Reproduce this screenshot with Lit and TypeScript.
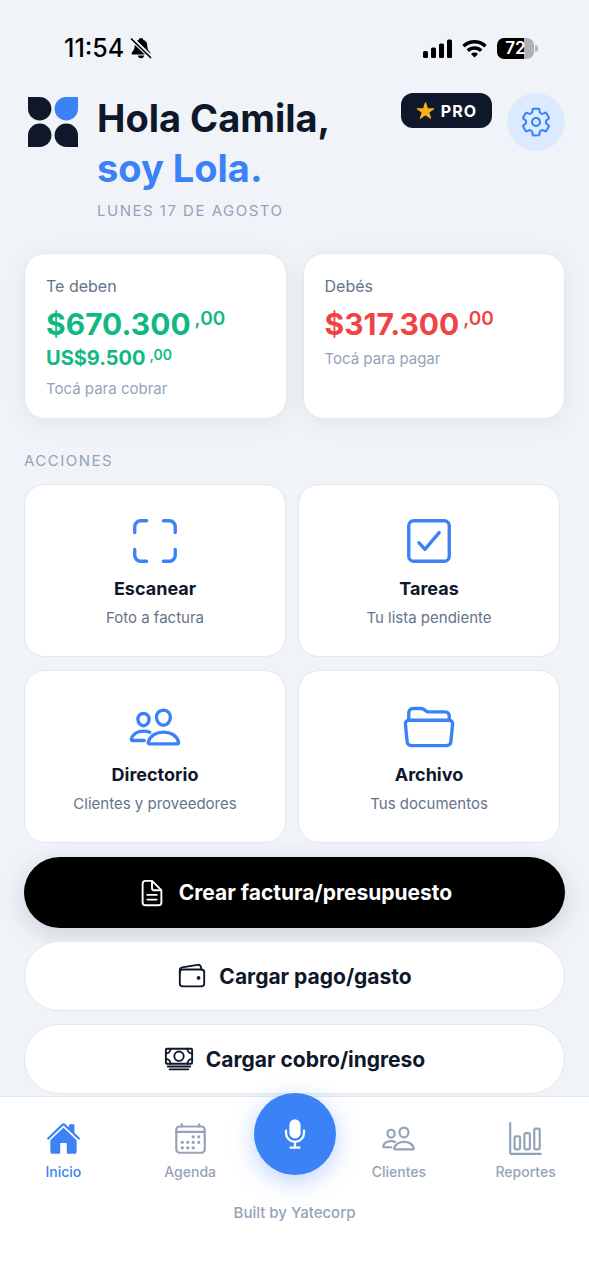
import { LitElement, html, css, svg, nothing } from "lit";
import { customElement, property } from "lit/decorators.js";

const ICONS: Record<string, unknown> = {
  scan: svg`<path d="M336 448h56a56 56 0 0056-56v-56M448 176v-56a56 56 0 00-56-56h-56M176 448h-56a56 56 0 01-56-56v-56M64 176v-56a56 56 0 0156-56h56"/>`,
  check: svg`<path d="M352 176L217.6 336 160 272"/><rect x="64" y="64" width="384" height="384" rx="48"/>`,
  people: svg`<path d="M402 168c-2.93 40.67-33.1 72-66 72s-63.12-31.32-66-72c-3-42.31 26.37-72 66-72s69 30.46 66 72z"/><path d="M336 304c-65.17 0-127.84 32.37-143.54 95.41-2.08 8.34 3.15 16.59 11.72 16.59h263.65c8.57 0 13.77-8.25 11.72-16.59C463.85 335.36 401.18 304 336 304z"/><path d="M200 185.94c-2.34 32.48-26.72 58.06-53 58.06s-50.7-25.57-53-58.06C91.61 152.15 115.34 128 147 128s55.39 24.77 53 57.94z"/><path d="M206 306c-18.05-8.27-37.93-11.45-59-11.45-52 0-102.1 25.85-114.65 76.2-1.65 6.66 2.53 13.25 9.37 13.25H154"/>`,
  folder: svg`<path d="M64 192v-72a40 40 0 0140-40h75.89a40 40 0 0122.19 6.72l27.84 18.56a40 40 0 0022.19 6.72H408a40 40 0 0140 40v40"/><path d="M479.9 226.55L463.68 392a40 40 0 01-39.93 40H88.25a40 40 0 01-39.93-40L32.1 226.55A32 32 0 0164 192h384.1a32 32 0 0131.8 34.55z"/>`,
  doc: svg`<path d="M416 221.25V416a48 48 0 01-48 48H144a48 48 0 01-48-48V96a48 48 0 0148-48h98.75a32 32 0 0122.62 9.37l141.26 141.26a32 32 0 019.37 22.62z"/><path d="M256 56v120a32 32 0 0032 32h120M176 288h160M176 368h160"/>`,
  wallet: svg`<rect x="48" y="144" width="416" height="288" rx="48"/><path d="M411.36 144v-30A50 50 0 00352 64.9L88.64 109.85A50 50 0 0048 159v49"/><circle class="solid" cx="368" cy="288" r="32"/>`,
  cash: svg`<rect x="32" y="80" width="448" height="256" rx="16"/><path d="M64 384h384M96 432h320"/><circle cx="256" cy="208" r="80"/><path d="M480 160a80 80 0 01-80-80M32 160a80 80 0 0080-80M480 256a80 80 0 00-80 80M32 256a80 80 0 0180 80"/>`,
  home: svg`<path class="solid" d="M261.56 101.28a8 8 0 00-11.06 0L66.4 277.15a8 8 0 00-2.47 5.79L63.9 448a32 32 0 0032 32H192a16 16 0 0016-16V328a8 8 0 018-8h80a8 8 0 018 8v136a16 16 0 0016 16h96.06a32 32 0 0032-32V282.94a8 8 0 00-2.47-5.79z"/><path class="solid" d="M490.91 244.15l-74.8-71.56V64a16 16 0 00-16-16h-48a16 16 0 00-16 16v32l-57.92-55.38C272.77 35.14 264.71 32 256 32c-8.68 0-16.72 3.14-22.14 8.63l-212.7 203.5c-6.22 6-7 15.87-1.34 22.37A16 16 0 0043 267.56L250.5 69.28a8 8 0 0111.06 0l207.52 198.28a16 16 0 0022.59-.44c6.14-6.36 5.63-16.86-.76-22.97z"/>`,
  calendar: svg`<rect x="48" y="80" width="416" height="384" rx="48"/><path d="M128 48v32M384 48v32M464 160H48"/>${[[296, 232], [376, 232], [296, 312], [376, 312], [136, 312], [216, 312], [136, 392], [216, 392], [296, 392]].map(([x, y]) => svg`<circle class="solid" cx=${x} cy=${y} r="24"/>`)}`,
  chart: svg`<path d="M32 32v432a16 16 0 0016 16h432"/><rect x="96" y="224" width="80" height="192" rx="20"/><rect x="240" y="176" width="80" height="240" rx="20"/><rect x="384" y="112" width="80" height="304" rx="20"/>`,
  mic: svg`<path d="M192 448h128M384 208v32c0 70.4-57.6 128-128 128s-128-57.6-128-128v-32M256 368v80"/><path class="solid" d="M256 320a78.83 78.83 0 01-56.55-24.1A80.89 80.89 0 01176 239V128a79.69 79.69 0 0180-80c44.86 0 80 35.14 80 80v111c0 44.66-35.89 81-80 81z"/>`,
  settings: svg`<path d="M262.29 192.31a64 64 0 1057.4 57.4 64.13 64.13 0 00-57.4-57.4zM416.39 256a154.34 154.34 0 01-1.53 20.79l45.21 35.46a10.81 10.81 0 012.45 13.75l-42.77 74a10.81 10.81 0 01-13.14 4.59l-44.9-18.08a16.11 16.11 0 00-15.17 1.75A164.48 164.48 0 01325 400.8a15.94 15.94 0 00-8.82 12.14l-6.73 47.89a11.08 11.08 0 01-10.68 9.17h-85.54a11.11 11.11 0 01-10.69-8.87l-6.72-47.82a16.07 16.07 0 00-9-12.22 155.3 155.3 0 01-21.46-12.57 16 16 0 00-15.11-1.71l-44.89 18.07a10.81 10.81 0 01-13.14-4.58l-42.77-74a10.8 10.8 0 012.45-13.75l38.21-30a16.05 16.05 0 006-14.08c-.36-4.17-.58-8.33-.58-12.5s.21-8.27.58-12.35a16 16 0 00-6.07-13.94l-38.19-30A10.81 10.81 0 0149.48 186l42.77-74a10.81 10.81 0 0113.14-4.59l44.9 18.08a16.11 16.11 0 0015.17-1.75A164.48 164.48 0 01187 111.2a15.94 15.94 0 008.82-12.14l6.73-47.89A11.08 11.08 0 01213.23 42h85.54a11.11 11.11 0 0110.69 8.87l6.72 47.82a16.07 16.07 0 009 12.22 155.3 155.3 0 0121.46 12.57 16 16 0 0015.11 1.71l44.89-18.07a10.81 10.81 0 0113.14 4.58l42.77 74a10.8 10.8 0 01-2.45 13.75l-38.21 30a16.05 16.05 0 00-6.05 14.08c.33 4.14.55 8.3.55 12.47z"/>`,
  star: svg`<path class="solid" d="M394 480a16 16 0 01-9.39-3L256 383.76 127.39 477a16 16 0 01-24.55-18.08L153 310.35 23 221.2a16 16 0 019-29.2h160.38l48.4-148.95a16 16 0 0130.44 0l48.4 149H480a16 16 0 019.05 29.2L359 310.35l50.13 148.53A16 16 0 01394 480z"/>`,
};

@customElement("ui-icon")
class UiIcon extends LitElement {
  @property() name = "";

  static styles = css`
    :host { display: block; flex: none; width: 30px; height: 30px; }
    svg { display: block; width: 100%; height: 100%; fill: none; stroke: currentColor;
      stroke-width: 32; stroke-linecap: round; stroke-linejoin: round; }
    .solid { fill: currentColor; stroke: none; }
  `;

  render() {
    return html`<svg viewBox="0 0 512 512" aria-hidden="true">${ICONS[this.name]}</svg>`;
  }
}

const ACTIONS = [
  { icon: "scan", title: "Escanear", sub: "Foto a factura" },
  { icon: "check", title: "Tareas", sub: "Tu lista pendiente" },
  { icon: "people", title: "Directorio", sub: "Clientes y proveedores" },
  { icon: "folder", title: "Archivo", sub: "Tus documentos" },
];

@customElement("app-root")
class AppRoot extends LitElement {
  static styles = css`
    :host { display: flex; flex-direction: column; min-height: 100vh; background: #f0f4f9;
      color: #0f172a; font-family: Inter, sans-serif; }
    * { box-sizing: border-box; }
    button { font: inherit; color: inherit; border: 0; padding: 0; background: none; cursor: pointer; }
    a { color: inherit; text-decoration: none; }
    h1, h2, p { margin: 0; font-weight: inherit; }

    .status { display: flex; justify-content: space-between; align-items: center;
      padding: 36px 51px 0 64px; color: #000; }
    .time { display: flex; align-items: center; gap: 6px; font-size: 25px; line-height: 24px; font-weight: 500; }
    .bell { display: block; width: 22px; height: 22px; }
    .signals { display: flex; align-items: center; gap: 10px; }
    .signals svg { display: block; }
    .battery { display: flex; align-items: center; gap: 1px; }
    .cell { width: 37px; height: 21px; border-radius: 7px; color: #fff; font-size: 17px; font-weight: 600;
      line-height: 21px; text-align: center; background: linear-gradient(90deg, #000 73%, #aeb1b5 73%); }
    .cap { width: 3px; height: 7px; border-radius: 0 3px 3px 0; background: #b4b7bb; }

    .page { display: flex; flex-direction: column; padding: 33px 24px 2px; }
    .header { display: flex; align-items: flex-start; }
    .logo { display: block; flex: none; width: 50px; height: 50px; margin: 4px 19px 0 4px; }
    .greet { flex: 1; }
    .hello { font-size: 38px; line-height: 50px; font-weight: 700; }
    .lola { display: block; color: #3b82f6; }
    .date { color: #94a3b8; font-size: 15px; line-height: 20px; letter-spacing: 1.5px; margin-top: 8px; }
    .tools { display: flex; align-items: flex-start; gap: 15px; }
    .pro { display: flex; align-items: center; gap: 6px; height: 35px; padding: 0 15px; border-radius: 12px;
      background: #0f172a; color: #fff; font-size: 16px; font-weight: 700; letter-spacing: 1px; }
    .pro ui-icon { width: 19px; height: 19px; color: #fbb018; }
    .gear { display: grid; place-items: center; width: 58px; height: 58px; border-radius: 50%;
      background: #dbeafe; color: #3b82f6; }
    .gear ui-icon { width: 32px; height: 32px; }

    .balances { display: grid; grid-template-columns: 1fr 1fr; gap: 16px; margin-top: 32px; }
    .balance { display: flex; flex-direction: column; align-items: flex-start; text-align: left;
      min-height: 166px; padding: 20px 21px 16px; border: 1px solid #e2e8f0; border-radius: 21px; background: #fff;
      box-shadow: 0 4px 24px rgba(15, 23, 42, 0.06); }
    .label { color: #64748b; font-size: 16px; line-height: 24px; }
    .amount { display: flex; align-items: flex-start; gap: 4px; font-size: 30px; line-height: 32px;
      font-weight: 700; margin-top: 10px; }
    .cents { font-size: 19px; line-height: 22px; font-weight: 600; }
    .minor { font-size: 20px; line-height: 24px; margin-top: 6px; }
    .minor .cents { font-size: 14px; line-height: 18px; }
    .green { color: #10b981; }
    .red { color: #ef4444; }
    .hint { color: #94a3b8; font-size: 15px; line-height: 20px; margin-top: 9px; }

    .section { color: #94a3b8; font-size: 15px; line-height: 20px; letter-spacing: 1.5px; margin: 32px 0 13px; }
    .grid { display: grid; grid-template-columns: 1fr 1fr; gap: 13px 12px; padding-right: 5px; }
    .tile { display: flex; flex-direction: column; align-items: center; min-height: 173px; padding: 29px 8px 0;
      border: 1px solid #e2e8f0; border-radius: 21px; background: #fff; }
    .tile ui-icon { width: 54px; height: 54px; color: #3b82f6; }
    .name { font-size: 18px; line-height: 24px; font-weight: 700; margin-top: 9px; }
    .sub { color: #64748b; font-size: 15px; line-height: 20px; margin-top: 7px; }

    .ctas { display: flex; flex-direction: column; gap: 13px; margin-top: 14px; }
    .cta { display: flex; align-items: center; justify-content: center; gap: 12px; height: 70px;
      border: 1px solid #e2e8f0; border-radius: 36px; background: #fff; font-size: 21px; font-weight: 700; }
    .primary { height: 71px; border: 0; background: #000; color: #fff;
      box-shadow: 0 6px 24px rgba(15, 23, 42, 0.16); }

    .nav { flex: 1; background: #fff; border-top: 1px solid #e2e8f0; }
    .tabs { display: flex; align-items: flex-start; }
    .tab { flex: 1; display: flex; flex-direction: column; align-items: center; gap: 6px; padding-top: 24px;
      color: #94a3b8; font-size: 14px; line-height: 20px; font-weight: 500; }
    .tab ui-icon { width: 35px; height: 35px; }
    .tab.active { color: #3b82f6; }
    .voice { display: grid; place-items: center; width: 82px; height: 82px; margin-top: -4px; border-radius: 50%;
      background: #3b82f6; color: #fff; box-shadow: 0 6px 24px rgba(59, 130, 246, 0.35); }
    .voice ui-icon { width: 36px; height: 36px; }
    .credit { color: #94a3b8; font-size: 15px; line-height: 20px; font-weight: 500; text-align: center;
      margin: 21px 0 24px; }
  `;

  private amount(value: string, tone: string, minor = false) {
    return html`<span class="amount ${tone} ${minor ? "minor" : ""}"><span>${value}</span><span class="cents">,00</span></span>`;
  }

  private tab(icon: string, label: string, active = false) {
    return html`<a class="tab ${active ? "active" : ""}" href="#" aria-current=${active ? "page" : nothing}>
      <ui-icon name=${icon}></ui-icon><span>${label}</span></a>`;
  }

  render() {
    return html`
      <div class="status">
        <div class="time">
          <span>11:54</span>
          <svg class="bell" viewBox="0 0 22 22" aria-hidden="true">
            <path d="M11 1c-1.3 0-2.2.8-2.4 1.9C6 3.7 4.700 5.800 4.700 8.500c0 3.800-1.300 5.300-2.700 6.700-.9.9-.5 2.200.8 2.200h16.400c1.300 0 1.700-1.300.8-2.200-1.400-1.400-2.700-2.900-2.700-6.700 0-2.700-1.300-4.800-3.900-5.600C13.200 1.800 12.300 1 11 1zM8 18.600a3 2.600 0 006 0z" fill="currentColor"/>
            <path d="M1.5 1.5l19 18.5" stroke="#f0f4f9" stroke-width="4.5"/>
            <path d="M1.5 2l19 18.5" stroke="currentColor" stroke-width="1.7" stroke-linecap="round"/>
          </svg>
        </div>
        <div class="signals">
          <svg width="29" height="19" viewBox="0 0 29 19" fill="currentColor" aria-hidden="true">
            <rect x="0" y="12" width="5" height="7" rx="1.5"/><rect x="8" y="8.5" width="5" height="10.5" rx="1.5"/>
            <rect x="16" y="4.5" width="5" height="14.5" rx="1.5"/><rect x="24" y="0.5" width="5" height="18.5" rx="1.5"/>
          </svg>
          <svg width="25" height="19" viewBox="0 0 25 19" fill="none" stroke="currentColor" stroke-width="3.4" aria-hidden="true">
            <path d="M1.5 7.3a15.6 15.6 0 0122 0M5.8 11.7a9.5 9.5 0 0113.4 0"/>
            <path d="M12.5 18.5l-3.5-3.6a5 5 0 017 0z" fill="currentColor" stroke="none"/>
          </svg>
          <div class="battery"><div class="cell">72</div><div class="cap"></div></div>
        </div>
      </div>

      <main class="page">
        <header class="header">
          <svg class="logo" viewBox="0 0 50 50" fill="#0f172a" aria-hidden="true">
            <path d="M0 0h11.7a11.7 11.7 0 11-11.7 11.7z"/>
            <path d="M50 0H38.3A11.7 11.7 0 1050 11.7z" fill="#3b82f6"/>
            <path d="M0 50V38.3A11.7 11.7 0 1111.7 50z"/>
            <path d="M50 50V38.3A11.7 11.7 0 1038.3 50z"/>
          </svg>
          <div class="greet">
            <h1 class="hello">Hola Camila,<span class="lola">soy Lola.</span></h1>
            <p class="date">LUNES 17 DE AGOSTO</p>
          </div>
          <div class="tools">
            <button class="pro"><ui-icon name="star"></ui-icon>PRO</button>
            <button class="gear" aria-label="Configuración"><ui-icon name="settings"></ui-icon></button>
          </div>
        </header>

        <section class="balances">
          <button class="balance">
            <span class="label">Te deben</span>
            ${this.amount("$670.300", "green")}
            ${this.amount("US$9.500", "green", true)}
            <span class="hint">Tocá para cobrar</span>
          </button>
          <button class="balance">
            <span class="label">Debés</span>
            ${this.amount("$317.300", "red")}
            <span class="hint">Tocá para pagar</span>
          </button>
        </section>

        <h2 class="section">ACCIONES</h2>
        <section class="grid">
          ${ACTIONS.map((a) => html`<button class="tile">
            <ui-icon name=${a.icon}></ui-icon>
            <span class="name">${a.title}</span>
            <span class="sub">${a.sub}</span>
          </button>`)}
        </section>

        <section class="ctas">
          <button class="cta primary"><ui-icon name="doc"></ui-icon>Crear factura/presupuesto</button>
          <button class="cta"><ui-icon name="wallet"></ui-icon>Cargar pago/gasto</button>
          <button class="cta"><ui-icon name="cash"></ui-icon>Cargar cobro/ingreso</button>
        </section>
      </main>

      <footer class="nav">
        <nav class="tabs">
          ${this.tab("home", "Inicio", true)}
          ${this.tab("calendar", "Agenda")}
          <button class="voice" aria-label="Hablar"><ui-icon name="mic"></ui-icon></button>
          ${this.tab("people", "Clientes")}
          ${this.tab("chart", "Reportes")}
        </nav>
        <p class="credit">Built by Yatecorp</p>
      </footer>
    `;
  }
}
